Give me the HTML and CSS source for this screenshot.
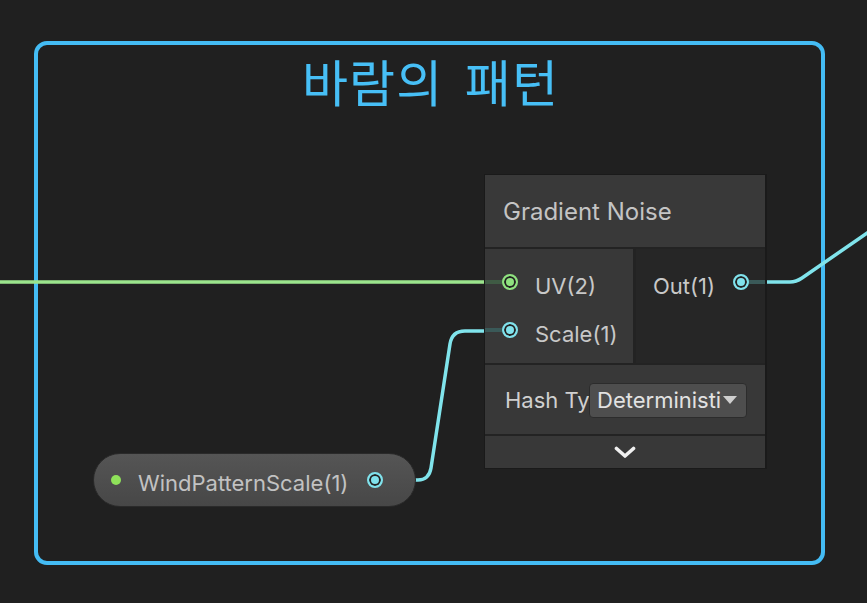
FILE: index.html
```html
<!DOCTYPE html>
<html lang="ko">
<head>
<meta charset="utf-8">
<link rel="stylesheet" href="styles.css">
</head>
<body>
<div class="canvas">
  <div class="group">
    <div class="group-title">바람의 패턴</div>
  </div>

  <svg class="wires" width="867" height="603" viewBox="0 0 867 603">
    <path class="wire wire-green" d="M0 282 H488"/>
    <path class="wire wire-cyan" d="M410 480 H418 Q429 480 431 468 L450 344 Q452 331 465 331 H488"/>
    <path class="wire wire-cyan" d="M764 282 H790 Q796 282 802 278 L870 231"/>
  </svg>

  <div class="node">
    <div class="node-header">Gradient Noise</div>
    <div class="node-ports">
      <div class="inputs">
        <div class="port-row">
          <span class="stub stub-green"></span>
          <span class="port port-green"></span>
          <span class="port-label">UV(2)</span>
        </div>
        <div class="port-row">
          <span class="stub stub-cyan"></span>
          <span class="port port-cyan"></span>
          <span class="port-label">Scale(1)</span>
        </div>
      </div>
      <div class="outputs">
        <div class="port-row out-row">
          <span class="port-label">Out(1)</span>
          <span class="port port-cyan"></span>
          <span class="stub stub-cyan stub-out"></span>
        </div>
      </div>
    </div>
    <div class="node-settings">
      <span class="setting-label">Hash Type</span>
      <div class="dropdown">
        <span class="dropdown-value">Deterministic</span>
        <span class="dropdown-arrow"></span>
      </div>
    </div>
    <div class="node-footer">
      <svg class="chevron" width="22" height="13" viewBox="0 0 22 13">
        <path d="M2.5 2.5 L11 10 L19.5 2.5" fill="none" stroke="#f0f0f0" stroke-width="3.6" stroke-linecap="round" stroke-linejoin="round"/>
      </svg>
    </div>
  </div>

  <div class="prop">
    <span class="prop-dot"></span>
    <span class="prop-label">WindPatternScale(1)</span>
    <span class="port port-cyan"></span>
  </div>
</div>
</body>
</html>
```

FILE: styles.css
```css
html, body {
  margin: 0;
  padding: 0;
  background: #202020;
  overflow: hidden;
}

.canvas {
  position: relative;
  width: 867px;
  height: 603px;
  background: #202020;
  font-family: "Inter", "Noto Sans", "Noto Sans CJK KR", sans-serif;
  overflow: hidden;
}

/* group frame */
.group {
  position: absolute;
  left: 34px;
  top: 41px;
  width: 791px;
  height: 524px;
  box-sizing: border-box;
  border: 4px solid #44bcf4;
  border-radius: 13px;
  z-index: 0;
}

.group-title {
  text-align: center;
  color: #47bff6;
  font-family: "Noto Sans CJK KR", sans-serif;
  font-size: 50px;
  font-weight: 400;
  letter-spacing: 1.2px;
  word-spacing: 6px;
  line-height: 60px;
  padding-top: 5px;
  padding-left: 2px;
}

/* wires */
.wires {
  position: absolute;
  left: 0;
  top: 0;
  z-index: 1;
}

.wire {
  fill: none;
  stroke-width: 3.5;
  stroke-linejoin: round;
}

.wire-green { stroke: #9be48c; }
.wire-cyan { stroke: #80e4ec; }

/* node */
.node {
  position: absolute;
  left: 484px;
  top: 174px;
  width: 280px;
  border: 1px solid #1a1a1a;
  border-right-width: 2px;
  background: #232323;
  display: flex;
  flex-direction: column;
  gap: 2px;
  z-index: 2;
  color: #c6c6c6;
}

.node-header {
  height: 72px;
  background: #393939;
  display: flex;
  align-items: center;
  padding-left: 18px;
  font-size: 24px;
  color: #c4c4c4;
}

.node-ports {
  height: 114px;
  display: grid;
  grid-template-columns: 148px 1fr;
  gap: 3px;
}

.inputs {
  background: #383838;
  padding-top: 9px;
}

.outputs {
  background: #262626;
  padding-top: 9px;
}

.port-row {
  position: relative;
  height: 48px;
  display: flex;
  align-items: center;
}

.port-label {
  font-size: 22px;
  padding-top: 7px;
  color: #c8c8c8;
  white-space: nowrap;
}

.inputs .port {
  margin-left: 17px;
}

.inputs .port-label {
  margin-left: 17px;
}

.out-row .port-label {
  margin-left: 17px;
}

.out-row .port {
  margin-left: 18px;
}

.stub {
  position: absolute;
  top: 22px;
  height: 4px;
}

.inputs .stub {
  left: 0;
  width: 22px;
}

.stub-out {
  right: 0;
  width: 22px;
}

.stub-green { background: #3f5a44; }
.stub-cyan { background: #3a5958; }

.port {
  position: relative;
  z-index: 1;
  box-sizing: border-box;
  width: 16px;
  height: 16px;
  border-radius: 50%;
  border: 2px solid;
  box-shadow: inset 0 0 0 2px #222;
  flex: none;
}

.port-green { background: #8fe27f; border-color: #8fe27f; }
.port-cyan { background: #80e2ec; border-color: #80e2ec; }

.node-settings {
  height: 69px;
  background: #383838;
  display: flex;
  align-items: center;
  padding-left: 20px;
}

.setting-label {
  width: 84px;
  overflow: hidden;
  white-space: nowrap;
  font-size: 22px;
  color: #d0d0d0;
  flex: none;
}

.dropdown {
  box-sizing: border-box;
  width: 158px;
  height: 35px;
  background: #4e4e4e;
  border: 1px solid #2c2c2c;
  border-radius: 4px;
  display: flex;
  align-items: center;
  padding-left: 7px;
  padding-right: 9px;
  margin-top: 1px;
}

.dropdown-value {
  flex: 1;
  overflow: hidden;
  white-space: nowrap;
  font-size: 22px;
  color: #e2e2e2;
}

.dropdown-arrow {
  width: 0;
  height: 0;
  border-left: 7px solid transparent;
  border-right: 7px solid transparent;
  border-top: 8px solid #cfcfcf;
  margin-left: 2px;
  flex: none;
}

.node-footer {
  height: 31px;
  background: #383838;
  display: flex;
  align-items: center;
  justify-content: center;
  padding-top: 1px;
}

/* property node */
.prop {
  position: absolute;
  left: 93px;
  top: 453px;
  width: 323px;
  height: 54px;
  box-sizing: border-box;
  border: 1px solid #2a2a2a;
  border-radius: 27px;
  background: linear-gradient(#555555, #474747);
  display: flex;
  align-items: center;
  z-index: 2;
}

.prop-dot {
  width: 10px;
  height: 10px;
  border-radius: 50%;
  background: #8fe25a;
  margin-left: 17px;
  flex: none;
}

.prop-label {
  font-size: 22px;
  color: #c2c2c2;
  margin-left: 17px;
  padding-top: 5px;
  white-space: nowrap;
}

.prop .port {
  width: 16px;
  height: 16px;
  margin-left: 19px;
}
```
